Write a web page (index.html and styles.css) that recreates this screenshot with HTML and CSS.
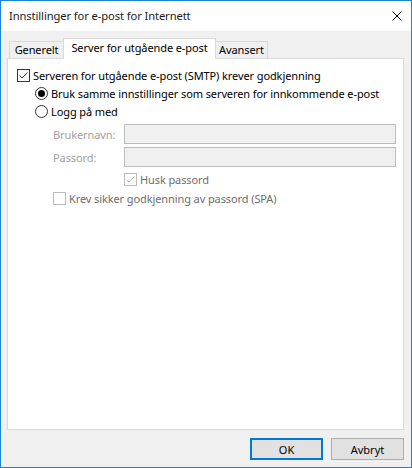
FILE: index.html
```html
<!DOCTYPE html>
<html lang="no">
<head>
<meta charset="utf-8">
<title>Innstillinger for e-post for Internett</title>
<link rel="stylesheet" href="styles.css">
</head>
<body>
<div class="window">
  <div class="titlebar">
    <span class="title">Innstillinger for e-post for Internett</span>
    <svg class="close" width="10" height="10" viewBox="0 0 10 10"><path d="M0.5 0.5 L9.5 9.5 M9.5 0.5 L0.5 9.5" stroke="#000" stroke-width="1" fill="none"/></svg>
  </div>
  <div class="content">
    <div class="tabs">
      <div class="tab first">Generelt</div>
      <div class="tab active">Server for utgående e-post</div>
      <div class="tab last">Avansert</div>
    </div>
    <div class="panel">
      <div class="row r-main">
        <span class="cb"><svg width="13" height="13" viewBox="0 0 13 13"><path d="M2.5 6.5 L5 9 L10.5 3.5" stroke="#333" stroke-width="1" fill="none"/></svg></span>
        <span class="lbl">Serveren for utgående e-post (SMTP) krever godkjenning</span>
      </div>
      <div class="row r-radio">
        <span class="radio on"><span class="dot"></span></span>
        <span class="lbl">Bruk samme innstillinger som serveren for innkommende e-post</span>
      </div>
      <div class="row r-radio">
        <span class="radio"></span>
        <span class="lbl">Logg på med</span>
      </div>
      <div class="field f-user">
        <span class="flabel">Brukernavn:</span>
        <span class="input"></span>
      </div>
      <div class="field f-pass">
        <span class="flabel">Passord:</span>
        <span class="input"></span>
      </div>
      <div class="row r-husk">
        <span class="cb dis"><svg width="13" height="13" viewBox="0 0 13 13"><path d="M2.5 6.5 L5 9 L10.5 3.5" stroke="#bcbcbc" stroke-width="1" fill="none"/></svg></span>
        <span class="lbl dis-text">Husk passord</span>
      </div>
      <div class="row r-spa">
        <span class="cb dis"></span>
        <span class="lbl dis-text">Krev sikker godkjenning av passord (SPA)</span>
      </div>
    </div>
    <div class="buttons">
      <button class="btn default">OK</button>
      <button class="btn">Avbryt</button>
    </div>
  </div>
</div>
</body>
</html>
```

FILE: styles.css
```css
* { box-sizing: border-box; }
html, body { margin: 0; padding: 0; }
body {
  font-family: "Noto Sans", "Open Sans", sans-serif;
  font-size: 11px;
  letter-spacing: -0.1px;
  color: #000;
  background: #f0f0f0;
}
.window {
  width: 412px;
  height: 468px;
  border: 1px solid #1883d7;
  background: #f0f0f0;
  display: flex;
  flex-direction: column;
}
.titlebar {
  height: 30px;
  background: #fff;
  display: flex;
  align-items: center;
  padding: 0 9px 0 8px;
  flex: none;
}
.title { flex: 1; line-height: 16px; font-size: 11.2px; color: #1a1a1a; }
.close { flex: none; }
.content {
  flex: 1;
  display: flex;
  flex-direction: column;
  padding: 7px 7px 0 6px;
}
.tabs {
  display: flex;
  height: 20px;
  padding-left: 2px;
  align-items: flex-end;
  position: relative;
  z-index: 1;
}
.tab {
  height: 17px;
  border: 1px solid #d9d9d9;
  border-bottom: none;
  background: #f0f0f0;
  line-height: 15px;
  white-space: nowrap;
  text-align: center;
}
.tab.first { border-right: none; width: 54px; }
.tab.last { border-left: none; width: 52px; }
.tab.active {
  height: 21px;
  margin-bottom: -1px;
  background: #fff;
  width: 153px;
  line-height: 17px;
}
.panel {
  height: 372px;
  border: 1px solid #d9d9d9;
  background: #fff;
  padding-top: 7px;
}
.row {
  display: flex;
  align-items: center;
  height: 18px;
}
.r-main { padding-left: 9px; }
.r-radio { padding-left: 27px; }
.r-husk { padding-left: 116px; margin-top: 3px; }
.r-spa { padding-left: 45px; margin-top: 1px; }
.lbl { margin-left: 3px; white-space: nowrap; }
.cb {
  width: 13px;
  height: 13px;
  border: 1px solid #333;
  background: #fff;
  flex: none;
  position: relative;
}
.cb svg { position: absolute; left: -1px; top: -1px; }
.cb.dis { border-color: #bcbcbc; }
.radio {
  width: 13px;
  height: 13px;
  border: 1px solid #333;
  border-radius: 50%;
  background: #fff;
  flex: none;
  display: flex;
  align-items: center;
  justify-content: center;
}
.radio .dot {
  width: 7px;
  height: 7px;
  border-radius: 50%;
  background: #000;
}
.dis-text { color: #6d6d6d; }
.field {
  display: flex;
  align-items: center;
  height: 20px;
  padding-left: 45px;
}
.f-user { margin-top: 4px; }
.f-pass { margin-top: 3px; }
.flabel { width: 71px; color: #a0a0a0; white-space: nowrap; }
.input {
  width: 272px;
  height: 20px;
  border: 1px solid #bcbcbc;
  background: #f0f0f0;
}
.buttons {
  display: flex;
  justify-content: flex-end;
  gap: 8px;
  padding: 8px 0 0 0;
}
.btn {
  width: 73px;
  height: 22px;
  font: inherit;
  color: #000;
  background: #e1e1e1;
  border: 1px solid #adadad;
  padding: 0;
  margin: 0;
}
.btn.default { border: 2px solid #0078d7; }
```
